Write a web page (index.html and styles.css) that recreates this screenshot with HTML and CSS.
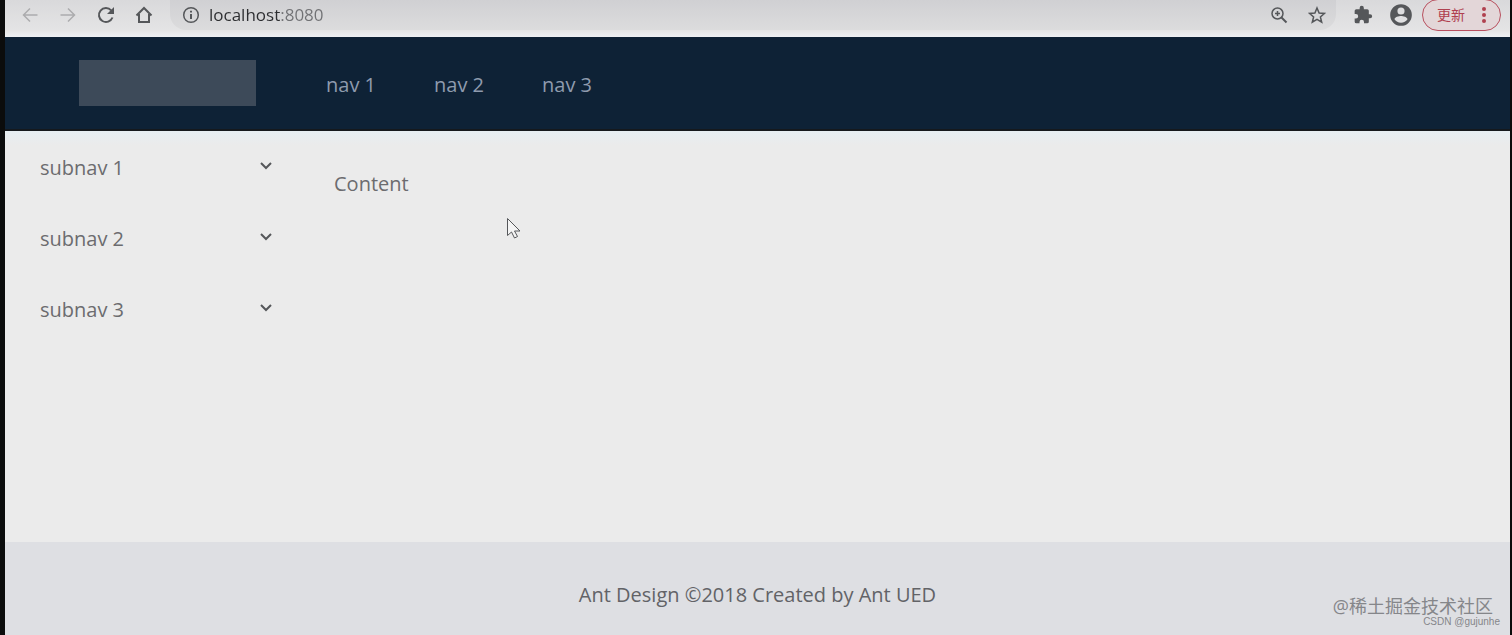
FILE: index.html
```html
<!DOCTYPE html>
<html lang="en">
<head>
    <meta charset="UTF-8">
    <meta name="viewport" content="width=device-width, initial-scale=1.0">
    <title>localhost:8080</title>
    <link rel="stylesheet" href="styles.css">
</head>
<body>
    <div class="window">
        <div class="toolbar">
            <button class="tool disabled" aria-label="Back">
                <svg width="16" height="16" viewBox="0 0 16 16"><path d="M15.500 8H1.500M8 1.500 1.500 8 8 14.500"/></svg>
            </button>
            <button class="tool disabled" aria-label="Forward">
                <svg width="16" height="16" viewBox="0 0 16 16"><path d="M.5 8h14M8 1.500 14.500 8 8 14.500"/></svg>
            </button>
            <button class="tool" aria-label="Reload">
                <svg width="18" height="18" viewBox="0 0 18 18"><path class="thick" d="M15.500 11.500A7 7 0 1 1 14.200 4.300"/><path class="solid" d="M17 1v7h-7z"/></svg>
            </button>
            <button class="tool" aria-label="Home">
                <svg width="18" height="18" viewBox="0 0 18 18"><path class="thick" d="M1.500 9.500 9 2l7.500 7.500M4 8v8h10V8"/></svg>
            </button>
            <div class="address">
                <svg width="18" height="18" viewBox="0 0 18 18"><circle cx="9" cy="9" r="7.300"/><path class="thick" d="M9 8v5M9 4.800v1.800"/></svg>
                <input class="url" type="text" value="localhost:8080" aria-label="Address" spellcheck="false">
                <button class="tool" aria-label="Zoom">
                    <svg width="18" height="18" viewBox="0 0 18 18"><circle cx="7.500" cy="7.500" r="5.500"/><path d="M7.500 5v5M5 7.500h5"/><path class="thick" d="m11.500 11.500 5 5"/></svg>
                </button>
                <button class="tool" aria-label="Bookmark this page">
                    <svg width="18" height="18" viewBox="0 0 18 18"><path d="m9 2 2.100 5 5.400.4-4.100 3.500 1.300 5.300L9 13.300l-4.700 2.900 1.300-5.300-4.100-3.500 5.400-.4z"/></svg>
                </button>
            </div>
            <button class="tool" aria-label="Extensions">
                <svg width="20" height="20" viewBox="0 0 24 24"><path class="solid" d="M20.500 11H19V7a2 2 0 0 0-2-2h-4V3.500a2.500 2.500 0 0 0-5 0V5H4a2 2 0 0 0-2 2v3.800h1.500a2.700 2.700 0 0 1 0 5.400H2V20a2 2 0 0 0 2 2h3.800v-1.500a2.700 2.700 0 0 1 5.400 0V22H17a2 2 0 0 0 2-2v-4h1.500a2.500 2.500 0 0 0 0-5z"/></svg>
            </button>
            <button class="tool" aria-label="Profile">
                <svg width="26" height="26" viewBox="0 0 24 24"><path class="solid" d="M12 2a10 10 0 1 0 0 20 10 10 0 0 0 0-20zm0 3a3.300 3.300 0 1 1 0 6.600A3.300 3.300 0 0 1 12 5zm0 14.200a7.200 7.200 0 0 1-6-3.200c0-2 4-3.100 6-3.100s6 1.100 6 3.100a7.200 7.200 0 0 1-6 3.200z"/></svg>
            </button>
            <button class="update">
                更新
                <svg width="4" height="16" viewBox="0 0 4 16"><circle cx="2" cy="2" r="2"/><circle cx="2" cy="8" r="2"/><circle cx="2" cy="14" r="2"/></svg>
            </button>
        </div>

        <header class="header">
            <div class="logo"></div>
            <nav class="menu">
                <a href="#nav1">nav 1</a>
                <a href="#nav2">nav 2</a>
                <a href="#nav3">nav 3</a>
            </nav>
        </header>

        <div class="layout">
            <aside class="sider">
                <button class="submenu">
                    subnav 1
                    <svg width="12" height="8" viewBox="0 0 12 8"><path d="m1 1 5 5 5-5"/></svg>
                </button>
                <button class="submenu">
                    subnav 2
                    <svg width="12" height="8" viewBox="0 0 12 8"><path d="m1 1 5 5 5-5"/></svg>
                </button>
                <button class="submenu">
                    subnav 3
                    <svg width="12" height="8" viewBox="0 0 12 8"><path d="m1 1 5 5 5-5"/></svg>
                </button>
            </aside>
            <main class="content">Content</main>
        </div>

        <footer class="footer">Ant Design ©2018 Created by Ant UED</footer>
    </div>

    <svg class="cursor" width="16" height="24" viewBox="0 0 16 24"><path d="M1.500 1.500v17l4-3.500 3 6 3-1.500-3-5.500h5.500z"/></svg>

    <div class="watermark">
        <span class="site">@稀土掘金技术社区</span>
        <span class="author">CSDN @gujunhe</span>
    </div>
</body>
</html>
```
FILE: styles.css
```css
* {
    box-sizing: border-box;
}

body {
    margin: 0;
    font-family: "Open Sans", "Noto Sans CJK SC", sans-serif;
    font-size: 20px;
    line-height: 32px;
    color: #6c6c6f;
    background-color: #0b0c0c;
}

button {
    padding: 0;
    border: none;
    background: none;
    font: inherit;
    color: inherit;
    cursor: pointer;
}

svg {
    display: block;
    flex: none;
    fill: none;
    stroke: #55575a;
    stroke-width: 1.5;
}

.thick {
    stroke-width: 2;
}

.solid {
    fill: #55575a;
    stroke: none;
}

.window {
    display: flex;
    flex-direction: column;
    min-height: 100vh;
    margin: 0 2px 0 5px;
    background-color: #ebebeb;
}

/* browser toolbar */
.toolbar {
    display: flex;
    align-items: center;
    height: 37px;
    padding: 0 9px 8px 6px;
    background: linear-gradient(#d9d9db, #e4e4e5 30px, #eef1f4);
}

.tool {
    display: flex;
    align-items: center;
    justify-content: center;
    width: 38px;
    height: 30px;
}

.disabled svg {
    stroke: #acacae;
}

.address {
    flex: 1;
    display: flex;
    align-items: center;
    height: 30px;
    margin: 0 8px 0 7px;
    padding-left: 12px;
    border-radius: 0 0 16px 16px;
    background: linear-gradient(#d0d0d3, #dcdcdd);
}

.url {
    flex: 1;
    min-width: 0;
    height: 30px;
    margin-left: 9px;
    padding: 0;
    border: none;
    outline: none;
    font-family: "Open Sans", sans-serif;
    font-size: 17px;
    /* host is dark, port is grey */
    color: transparent;
    background: linear-gradient(90deg, #2c2d30 72px, #707174 72px);
    -webkit-background-clip: text;
    background-clip: text;
}

.update {
    display: flex;
    align-items: center;
    justify-content: space-between;
    width: 79px;
    height: 32px;
    margin-left: 2px;
    padding: 0 14px;
    border: 1px solid #b8505f;
    border-radius: 16px;
    background-color: #e3d6d8;
    font-size: 14px;
    color: #b0404f;
}

.update svg {
    fill: #b0404f;
    stroke: none;
}

/* page */
.header {
    display: flex;
    align-items: center;
    height: 94px;
    padding: 0 74px;
    border-bottom: 2px solid #15191d;
    background-color: #0e2236;
}

.logo {
    width: 177px;
    height: 46px;
    background-color: #3d4a59;
}

.menu {
    display: flex;
    gap: 58px;
    margin-left: 70px;
    padding-top: 3px;
}

.menu a {
    color: #8f9bae;
    text-decoration: none;
}

.layout {
    flex: 1;
    display: flex;
    background: linear-gradient(#e6eef2, #ebebeb 14px);
}

.sider {
    width: 293px;
    padding-top: 6px;
}

.submenu {
    display: flex;
    align-items: center;
    justify-content: space-between;
    width: 100%;
    height: 62px;
    margin-bottom: 9px;
    padding: 0 26px 0 35px;
}

.submenu svg {
    margin-bottom: 5px;
    stroke-width: 2;
}

.content {
    flex: 1;
    padding: 37px 36px;
}

.footer {
    padding: 37px 74px 24px;
    background-color: #dedfe3;
    text-align: center;
    color: #626367;
}

.cursor {
    position: absolute;
    left: 506px;
    top: 217px;
    fill: #f4f4f4;
    stroke-width: 1;
}

.watermark {
    position: absolute;
    right: 12px;
    bottom: 7px;
    display: flex;
    flex-direction: column;
    align-items: flex-end;
    color: #85868a;
}

.site {
    margin-right: 7px;
    font-size: 18px;
    line-height: 20px;
}

.author {
    font-family: "Liberation Sans", sans-serif;
    font-size: 10px;
    line-height: 12px;
}
```
